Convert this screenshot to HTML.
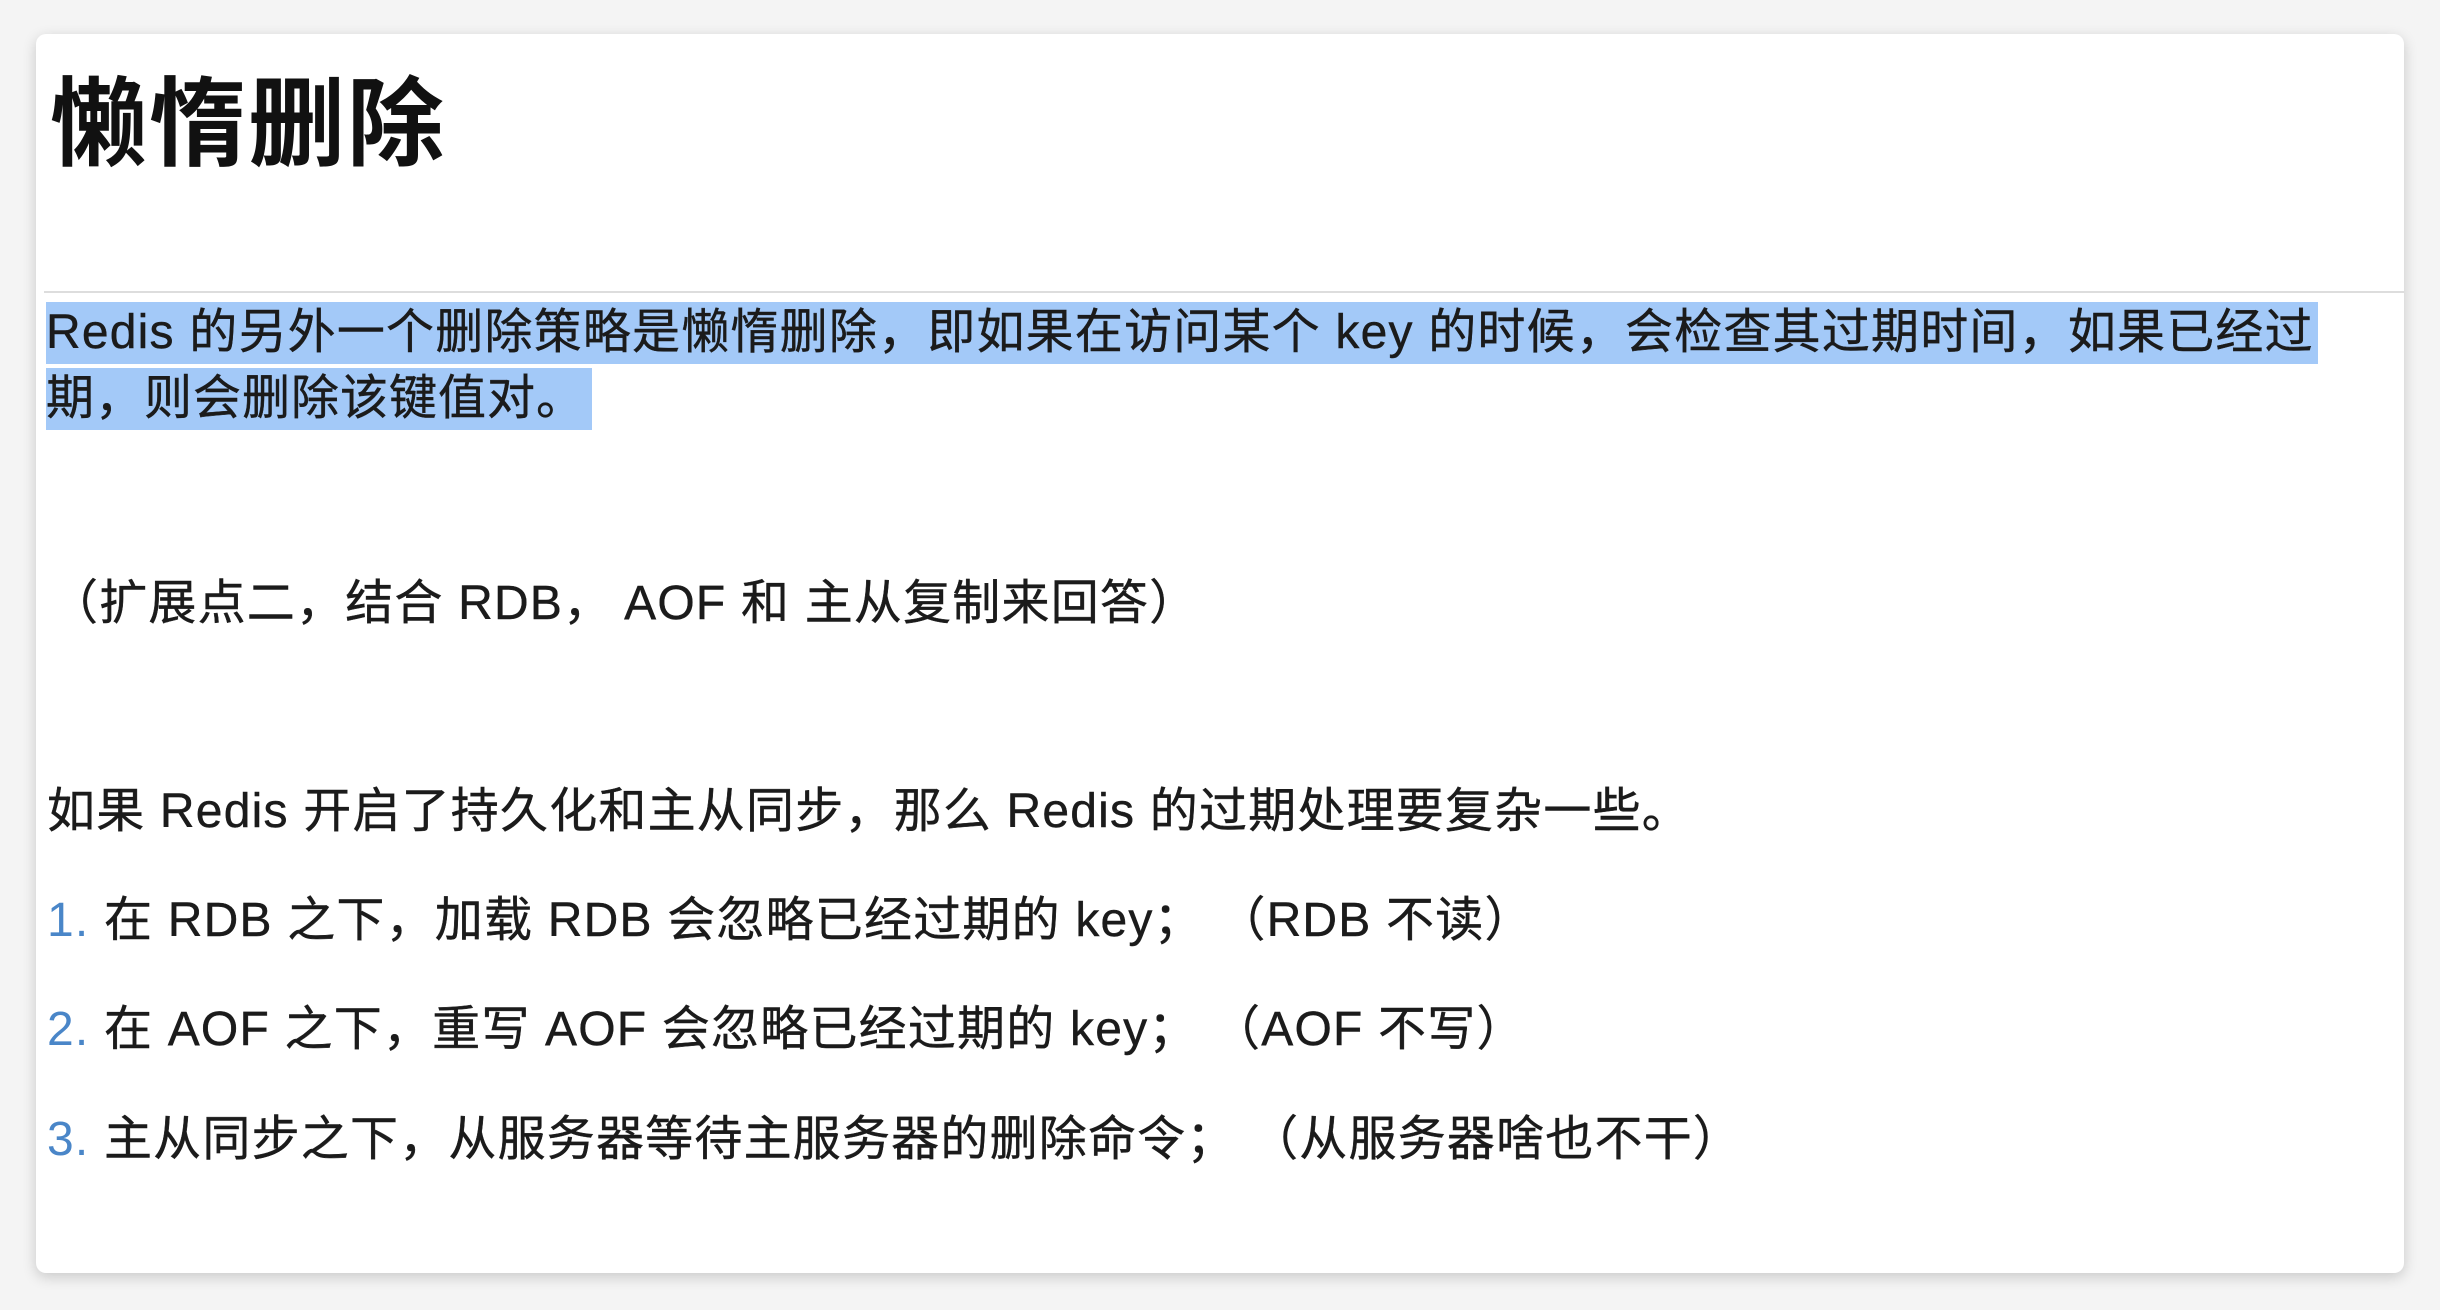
<!DOCTYPE html>
<html><head><meta charset="utf-8"><style>
html,body{margin:0;padding:0}
body{width:2440px;height:1310px;background:#f4f4f4;position:relative;overflow:hidden;font-family:"Liberation Sans","Noto Sans CJK SC",sans-serif;color:#1b1b1b}
.card{position:absolute;left:36px;top:34px;width:2368px;height:1239px;background:#fff;border-radius:10px;box-shadow:0 4px 14px rgba(0,0,0,.18)}
.t{position:absolute;white-space:nowrap;font-size:48px;line-height:62px;letter-spacing:1.2px;-webkit-text-stroke:0.4px #1b1b1b}
h1{position:absolute;left:50px;top:60px;margin:0;font-size:97px;font-weight:bold;line-height:130px;color:#111;letter-spacing:2px}
.hr{position:absolute;left:44px;top:291px;width:2360px;height:2px;background:#ddd}
.hl{background:#a3c9f8}
.n{color:#4a86c8;-webkit-text-stroke:0}
</style></head><body>
<div class="card"></div>
<h1>懒惰删除</h1>
<div class="hr"></div>
<div class="t" style="left:46px;top:302px;letter-spacing:0"><span class="hl" style="display:inline-block;width:2272px;letter-spacing:1.2px">Redis 的另外一个删除策略是懒惰删除，即如果在访问某个 key 的时候，会检查其过期时间，如果已经过</span></div>
<div class="t" style="left:46px;top:368px;letter-spacing:0"><span class="hl" style="display:inline-block;width:546px;letter-spacing:1px">期，则会删除该键值对。</span></div>
<div class="t" style="left:50px;top:573px">（扩展点二，结合 RDB， AOF 和 主从复制来回答）</div>
<div class="t" style="left:47px;top:781px">如果 Redis 开启了持久化和主从同步，那么 Redis 的过期处理要复杂一些。</div>
<div class="t" style="left:47px;top:890px"><span class="n">1.</span> 在 RDB 之下，加载 RDB 会忽略已经过期的 key；&nbsp;（RDB 不读）</div>
<div class="t" style="left:47px;top:999px"><span class="n">2.</span> 在 AOF 之下，重写 AOF 会忽略已经过期的 key；&nbsp;（AOF 不写）</div>
<div class="t" style="left:47px;top:1109px"><span class="n">3.</span> 主从同步之下，从服务器等待主服务器的删除命令；&nbsp;（从服务器啥也不干）</div>
</body></html>
